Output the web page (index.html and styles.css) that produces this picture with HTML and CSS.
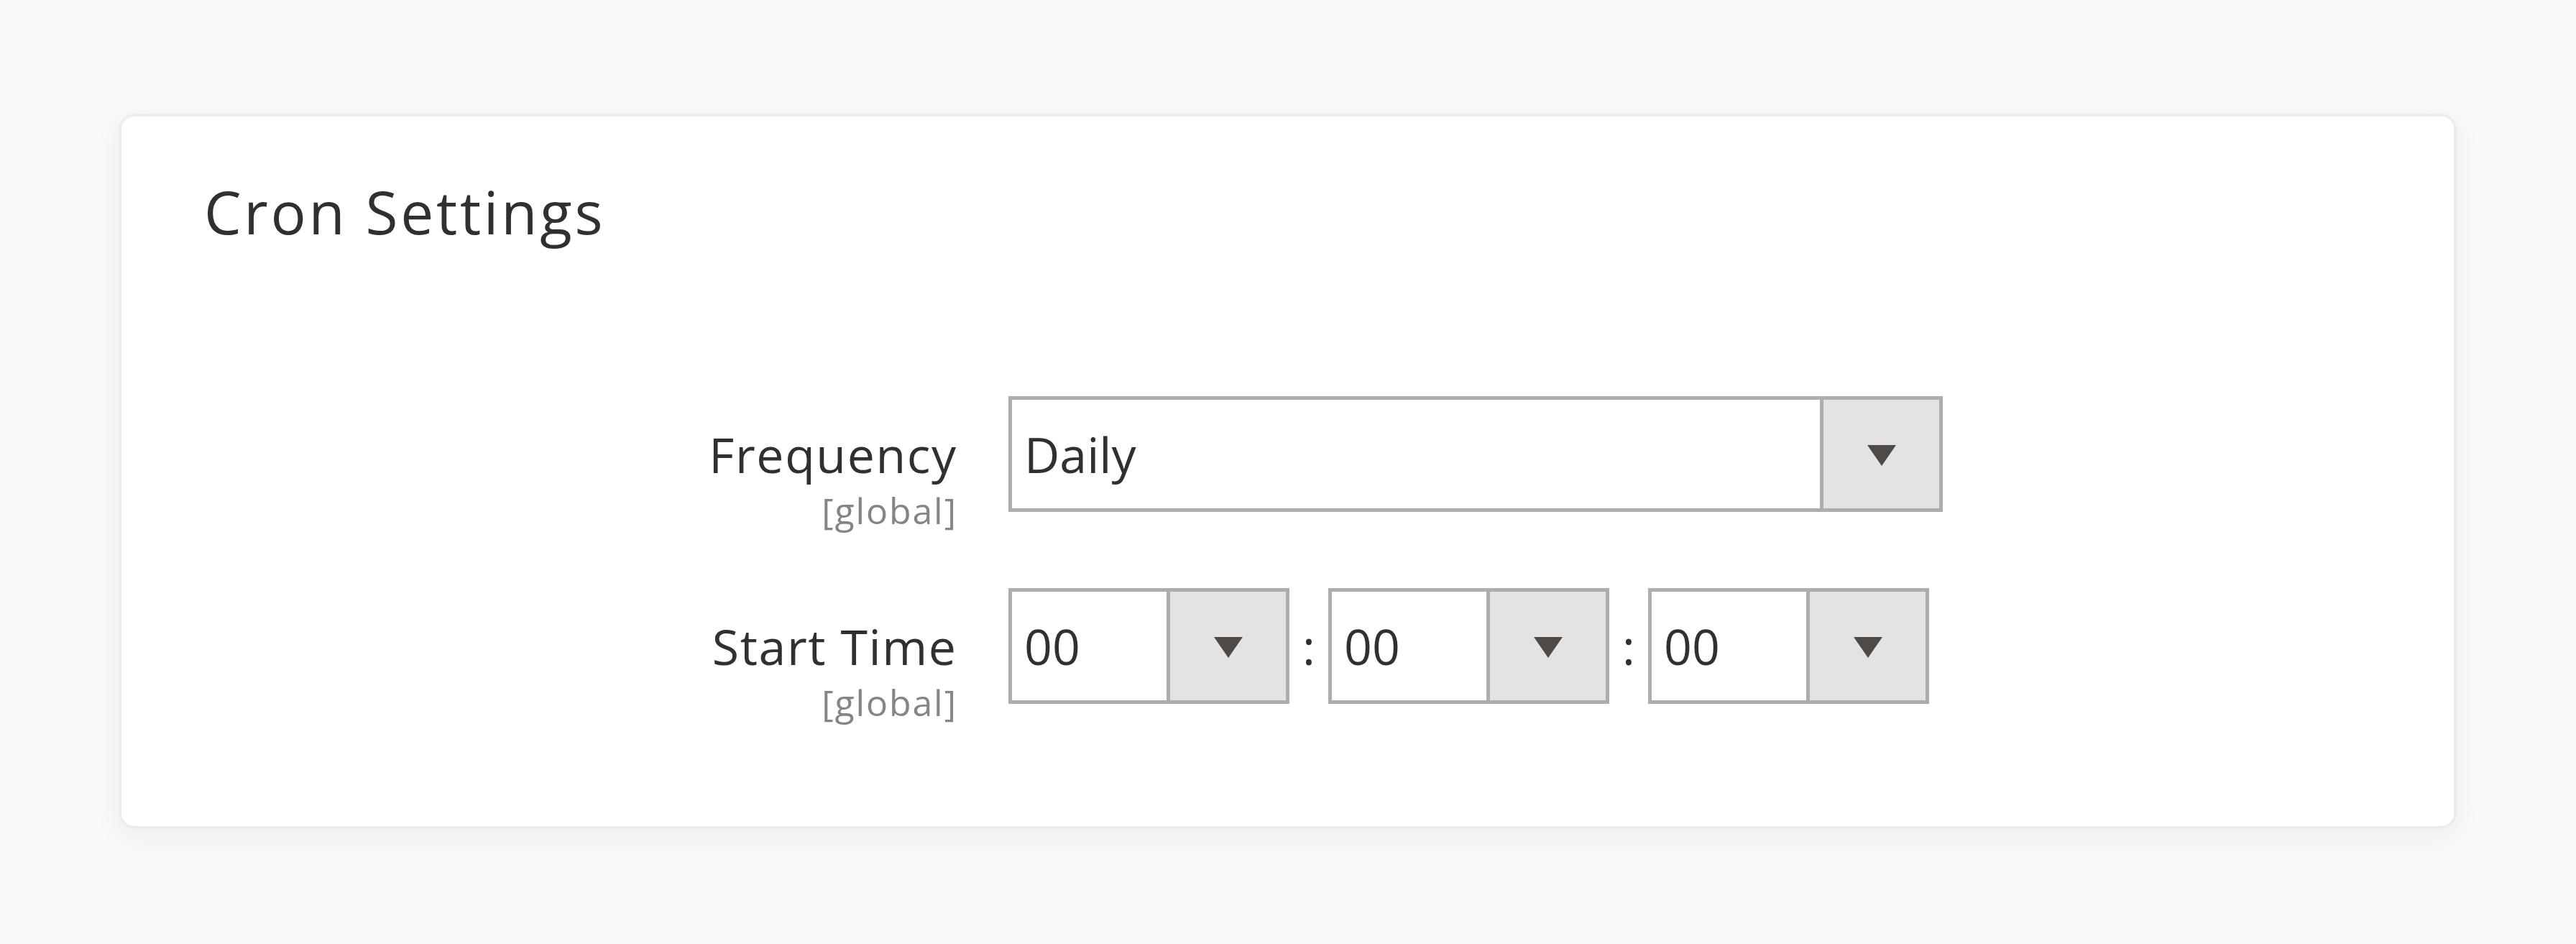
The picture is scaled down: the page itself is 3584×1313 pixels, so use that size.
FILE: index.html
```html
<!DOCTYPE html>
<html lang="en">
<head>
<meta charset="utf-8">
<title>Cron Settings</title>
<link rel="stylesheet" href="styles.css">
</head>
<body>
<div class="page">
  <section class="card">
    <h2 class="card-title">Cron Settings</h2>
    <div class="form">
      <div class="field-label">
        <span class="label-text">Frequency</span>
        <span class="scope">[global]</span>
      </div>
      <div class="control">
        <div class="select select-wide">
          <span class="select-value">Daily</span>
          <span class="select-btn"><svg class="arrow" viewBox="0 0 40 30" width="40" height="30"><polygon points="0,0 40,0 20,29" /></svg></span>
        </div>
      </div>

      <div class="field-label">
        <span class="label-text">Start Time</span>
        <span class="scope">[global]</span>
      </div>
      <div class="control time-control">
        <div class="select select-time">
          <span class="select-value">00</span>
          <span class="select-btn"><svg class="arrow" viewBox="0 0 40 30" width="40" height="30"><polygon points="0,0 40,0 20,29" /></svg></span>
        </div>
        <span class="colon">:</span>
        <div class="select select-time">
          <span class="select-value">00</span>
          <span class="select-btn"><svg class="arrow" viewBox="0 0 40 30" width="40" height="30"><polygon points="0,0 40,0 20,29" /></svg></span>
        </div>
        <span class="colon">:</span>
        <div class="select select-time">
          <span class="select-value">00</span>
          <span class="select-btn"><svg class="arrow" viewBox="0 0 40 30" width="40" height="30"><polygon points="0,0 40,0 20,29" /></svg></span>
        </div>
      </div>
    </div>
  </section>
</div>
</body>
</html>
```

FILE: styles.css
```css
html, body {
  margin: 0;
  padding: 0;
}

body {
  background: #f9f9f9;
  font-family: "Open Sans", "Noto Sans", "DejaVu Sans", sans-serif;
  color: #303030;
  width: 3584px;
  height: 1313px;
  overflow: hidden;
}

.page {
  padding: 158px 0 0 165px;
}

.card {
  box-sizing: border-box;
  width: 3253px;
  height: 995px;
  background: #ffffff;
  border: 4px solid #ececec;
  border-radius: 22px;
  box-shadow: 0 10px 40px rgba(0, 0, 0, 0.05);
  padding: 83px 0 0 115px;
}

.card-title {
  margin: 0;
  font-size: 82px;
  line-height: 98px;
  font-weight: 400;
  letter-spacing: 3.7px;
  color: #303030;
}

.form {
  margin-top: 208px;
  display: grid;
  grid-template-columns: 1045px auto;
  column-gap: 74px;
  row-gap: 74px;
  align-items: start;
}

.field-label {
  display: flex;
  flex-direction: column;
  align-items: flex-end;
  text-align: right;
  padding-top: 34px;
  margin-right: -1px;
}

.label-text {
  font-size: 68px;
  line-height: 93px;
  letter-spacing: 1.6px;
  margin-right: -1.6px;
  color: #303030;
}

.scope {
  font-size: 50px;
  line-height: 68px;
  letter-spacing: 1.9px;
  margin-right: -1.9px;
  margin-top: -2px;
  color: #858585;
}

.control {
  display: flex;
  align-items: center;
}

.select {
  box-sizing: border-box;
  display: flex;
  height: 161px;
  border: 5px solid #adadad;
  background: #ffffff;
}

.select-wide {
  width: 1300px;
}

.select-time {
  width: 391px;
}

.select-value {
  flex: 1;
  padding-left: 17px;
  font-size: 68px;
  line-height: 151px;
  color: #303030;
}

.select-btn {
  width: 161px;
  border-left: 5px solid #adadad;
  background: #e3e3e3;
  display: flex;
  align-items: center;
  justify-content: center;
  padding-top: 4px;
  box-sizing: content-box;
}

.arrow {
  display: block;
  fill: #514943;
}

.colon {
  width: 54px;
  text-align: center;
  font-size: 68px;
  line-height: 161px;
  color: #303030;
}
```
